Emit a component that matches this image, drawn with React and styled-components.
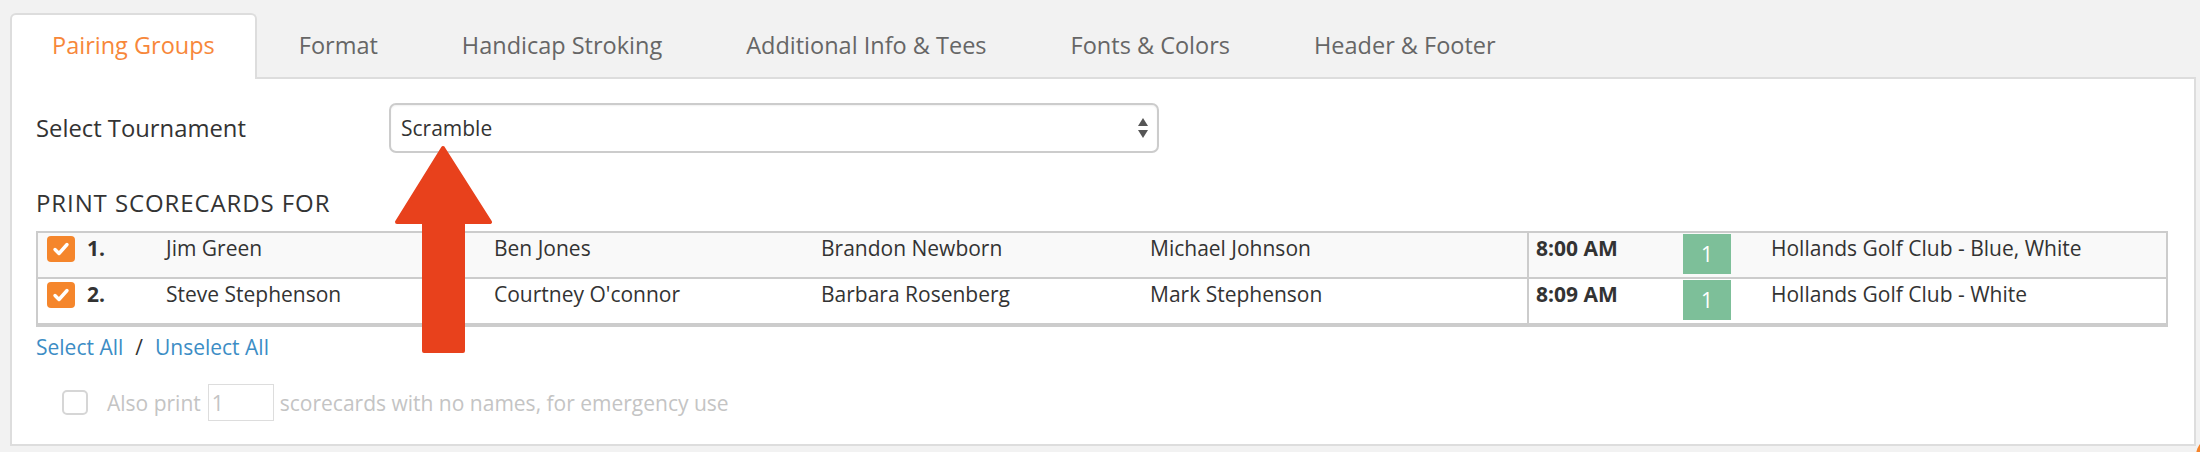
import React from 'react';
import styled, { createGlobalStyle } from 'styled-components';

const GlobalStyle = createGlobalStyle`
  html, body {
    margin: 0;
    padding: 0;
    background: #f2f2f2;
    overflow: hidden;
  }
  body {
    font-family: "Open Sans", "Liberation Sans", sans-serif;
    color: #333;
  }
`;

const Page = styled.div`
  position: relative;
  width: 2200px;
  height: 452px;
  box-sizing: border-box;
  padding: 13px 4px 0 10px;
  overflow: hidden;
`;

const TabBar = styled.div`
  display: flex;
  height: 64px;
`;

const Tab = styled.div`
  display: flex;
  align-items: center;
  padding: 0 40px 5px;
  border: 2px solid ${(p) => (p.$active ? '#dddddd' : 'transparent')};
  border-bottom: none;
  border-radius: 6px 6px 0 0;
  background: ${(p) => (p.$active ? '#ffffff' : 'transparent')};
  color: ${(p) => (p.$active ? '#f7873a' : '#666666')};
  font-size: 23.5px;
  line-height: 24px;
  margin-bottom: -2px;
  position: relative;
  z-index: 1;
  white-space: nowrap;
`;

const Panel = styled.div`
  height: 369px;
  box-sizing: border-box;
  background: #fff;
  border: 2px solid #dddddd;
  padding: 24px 26px 0 24px;
`;

const SelectRow = styled.div`
  display: flex;
  align-items: center;
`;

const Label = styled.div`
  width: 353px;
  font-size: 23.8px;
  color: #333;
`;

const SelectBox = styled.div`
  width: 770px;
  height: 50px;
  box-sizing: border-box;
  border: 2px solid #cccccc;
  border-radius: 7px;
  box-shadow: inset 0 1px 2px rgba(0, 0, 0, 0.06);
  display: flex;
  align-items: center;
  justify-content: space-between;
  padding: 0 8px 0 10px;
  font-size: 21px;
  color: #333;
`;

const Heading = styled.div`
  margin-top: 38px;
  font-size: 24px;
  line-height: 24px;
  letter-spacing: 0.9px;
  color: #333;
`;

const Table = styled.div`
  margin-top: 16px;
  border: 2px solid #cccccc;
  border-top: none;
  border-bottom-width: 4px;
`;

const Row = styled.div`
  display: grid;
  grid-template-columns: 49px 79px 328px 327px 329px 377px 156px 88px 1fr;
  height: 44px;
  border-top: 2px solid #cccccc;
  background: ${(p) => (p.$shade ? '#f9f9f9' : '#ffffff')};
  font-size: 21px;
  line-height: 24px;
  color: #333;
`;

const Cell = styled.div`
  padding-top: 3px;
  white-space: nowrap;
  font-weight: ${(p) => (p.$bold ? 700 : 400)};
`;

const CheckCell = styled.div`
  padding: 3px 0 0 9px;
`;

const TimeCell = styled(Cell)`
  border-left: 2px solid #cccccc;
  padding-left: 7px;
`;

const OrangeCheck = styled.div`
  width: 28px;
  height: 26px;
  border-radius: 4px;
  background: #f5862c;
  display: flex;
  align-items: center;
  justify-content: center;
`;

const TeeBox = styled.div`
  margin-top: 1px;
  width: 48px;
  height: 40px;
  background: #7dbf99;
  color: #fff;
  display: flex;
  align-items: center;
  justify-content: center;
  font-size: 21px;
`;

const LinkRow = styled.div`
  margin-top: 10px;
  display: flex;
  align-items: center;
  font-size: 21px;
  line-height: 21px;
  color: #333;
`;

const Link = styled.span`
  color: #3c8dc5;
`;

const Slash = styled.span`
  margin: 0 12px;
`;

const ExtraRow = styled.div`
  margin-top: 26px;
  display: flex;
  align-items: center;
  padding-left: 26px;
  font-size: 21px;
  color: #c4c4c4;
`;

const EmptyBox = styled.div`
  width: 26px;
  height: 25px;
  box-sizing: border-box;
  border: 2px solid #d6d6d6;
  border-radius: 5px;
  margin-right: 19px;
`;

const CountInput = styled.div`
  width: 66px;
  height: 37px;
  box-sizing: border-box;
  border: 1px solid #dddddd;
  margin: 0 6px 0 7px;
  padding-left: 3px;
  display: flex;
  align-items: center;
  color: #c4c4c4;
`;

const ArrowOverlay = styled.svg`
  position: absolute;
  left: 390px;
  top: 140px;
  pointer-events: none;
`;

const CornerBubble = styled.div`
  position: absolute;
  left: 2196px;
  top: 436px;
  width: 40px;
  height: 40px;
  border-radius: 50%;
  background: #f5842b;
`;

const tabs = ['Pairing Groups', 'Format', 'Handicap Stroking', 'Additional Info & Tees', 'Fonts & Colors', 'Header & Footer'];

const groups = [
  { n: '1.', players: ['Jim Green', 'Ben Jones', 'Brandon Newborn', 'Michael Johnson'], time: '8:00 AM', tee: '1', course: 'Hollands Golf Club - Blue, White' },
  { n: '2.', players: ['Steve Stephenson', "Courtney O'connor", 'Barbara Rosenberg', 'Mark Stephenson'], time: '8:09 AM', tee: '1', course: 'Hollands Golf Club - White' },
];

const Check = () => (
  <svg width="18" height="16" viewBox="0 0 18 16">
    <polyline points="3,8.5 7,12.5 15,3.5" fill="none" stroke="#fff" strokeWidth="3.4" strokeLinecap="round" strokeLinejoin="round" />
  </svg>
);

const SelectArrows = () => (
  <svg width="12" height="22" viewBox="0 0 12 22">
    <polygon points="6,1 11,9 1,9" fill="#555" />
    <polygon points="1,13 11,13 6,21" fill="#555" />
  </svg>
);

export default function App() {
  return (
    <>
      <GlobalStyle />
      <Page>
        <TabBar>
          {tabs.map((t, i) => (
            <Tab key={t} $active={i === 0}>{t}</Tab>
          ))}
        </TabBar>
        <Panel>
          <SelectRow>
            <Label>Select Tournament</Label>
            <SelectBox>
              <span>Scramble</span>
              <SelectArrows />
            </SelectBox>
          </SelectRow>
          <Heading>PRINT SCORECARDS FOR</Heading>
          <Table>
            {groups.map((g, i) => (
              <Row key={g.n} $shade={i === 0}>
                <CheckCell>
                  <OrangeCheck><Check /></OrangeCheck>
                </CheckCell>
                <Cell $bold>{g.n}</Cell>
                {g.players.map((p) => (
                  <Cell key={p}>{p}</Cell>
                ))}
                <TimeCell $bold>{g.time}</TimeCell>
                <div><TeeBox>{g.tee}</TeeBox></div>
                <Cell>{g.course}</Cell>
              </Row>
            ))}
          </Table>
          <LinkRow>
            <Link>Select All</Link>
            <Slash>/</Slash>
            <Link>Unselect All</Link>
          </LinkRow>
          <ExtraRow>
            <EmptyBox />
            <span>Also print</span>
            <CountInput>1</CountInput>
            <span>scorecards with no names, for emergency use</span>
          </ExtraRow>
        </Panel>
        <ArrowOverlay width="110" height="215" viewBox="0 0 110 215">
          <polygon points="53,8 100,82 73,82 73,211 34,211 34,82 7,82" fill="#e8411c" stroke="#e8411c" strokeWidth="4" strokeLinejoin="round" />
        </ArrowOverlay>
        <CornerBubble />
      </Page>
    </>
  );
}
